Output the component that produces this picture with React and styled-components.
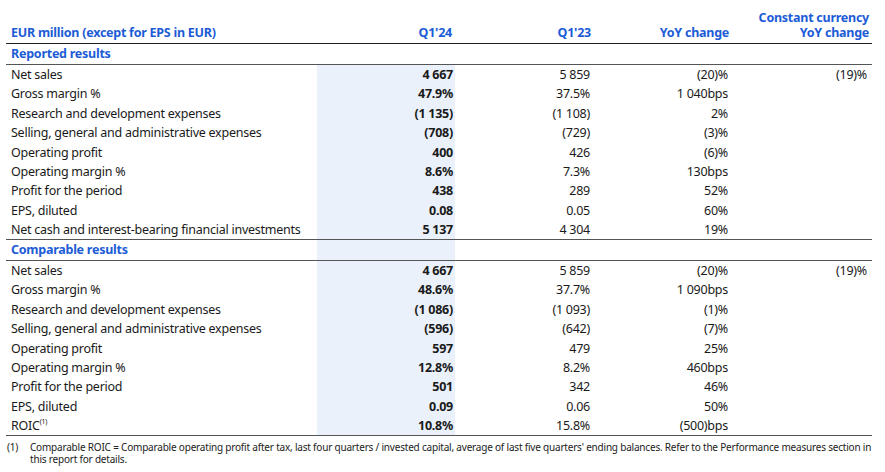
import React from "react";
import styled, { createGlobalStyle } from "styled-components";

const Global = createGlobalStyle`
  html, body { margin: 0; padding: 0; background: #fff; }
  body { font-family: "Noto Sans", "Open Sans", sans-serif; color: #1a1a1a; }
`;

const BLUE = "#1c5cd6";
const SHADE = "#eaf1fb";

const Page = styled.div`
  width: 885px;
  height: 472px;
  padding: 8px 13px 0 6px;
  box-sizing: border-box;
`;

const Table = styled.table`
  width: 866px;
  border-collapse: collapse;
  table-layout: fixed;
  font-size: 12.5px;
  letter-spacing: -0.25px;
`;

const Col = styled.col``;

const HeadCell = styled.th`
  color: ${BLUE};
  font-weight: 700;
  text-align: ${(p) => (p.$left ? "left" : "right")};
  vertical-align: bottom;
  padding: 0 ${(p) => (p.$left ? "0" : "3px")} 3px ${(p) => (p.$left ? "5px" : "0")};
  line-height: 14.5px;
  border-bottom: 1.5px solid #222;
  height: 32px;
`;

const SectionCell = styled.td`
  color: ${BLUE};
  font-weight: 700;
  padding: 0 0 0 5px;
  height: 20px;
  line-height: 20px;
  border-bottom: 1.5px solid #555;
  background: ${(p) => (p.$shade ? SHADE : "transparent")};
`;

const Row = styled.tr`
  height: 19.45px;
  border-bottom: ${(p) => (p.$last ? "1.5px solid #555" : "none")};
`;

const Label = styled.td`
  padding: 0 0 0 5px;
  line-height: 19px;
  white-space: nowrap;
`;

const Num = styled.td`
  text-align: right;
  padding: 0 ${(p) => p.$pr || 4}px 0 0;
  line-height: 19px;
  white-space: nowrap;
  font-weight: ${(p) => (p.$bold ? 700 : 400)};
  background: ${(p) => (p.$shade ? SHADE : "transparent")};
`;

const Sup = styled.sup`
  font-size: 7px;
  vertical-align: 6px;
  line-height: 0;
`;

const Footnote = styled.div`
  display: grid;
  grid-template-columns: 23px 1fr;
  font-size: 10px;
  letter-spacing: -0.2px;
  line-height: 11.5px;
  padding: 6px 0 0 1px;
  color: #222;
`;

const reported = [
  ["Net sales", "4 667", "5 859", "(20)%", "(19)%"],
  ["Gross margin %", "47.9%", "37.5%", "1 040bps", ""],
  ["Research and development expenses", "(1 135)", "(1 108)", "2%", ""],
  ["Selling, general and administrative expenses", "(708)", "(729)", "(3)%", ""],
  ["Operating profit", "400", "426", "(6)%", ""],
  ["Operating margin %", "8.6%", "7.3%", "130bps", ""],
  ["Profit for the period", "438", "289", "52%", ""],
  ["EPS, diluted", "0.08", "0.05", "60%", ""],
  ["Net cash and interest-bearing financial investments", "5 137", "4 304", "19%", ""],
];

const comparable = [
  ["Net sales", "4 667", "5 859", "(20)%", "(19)%"],
  ["Gross margin %", "48.6%", "37.7%", "1 090bps", ""],
  ["Research and development expenses", "(1 086)", "(1 093)", "(1)%", ""],
  ["Selling, general and administrative expenses", "(596)", "(642)", "(7)%", ""],
  ["Operating profit", "597", "479", "25%", ""],
  ["Operating margin %", "12.8%", "8.2%", "460bps", ""],
  ["Profit for the period", "501", "342", "46%", ""],
  ["EPS, diluted", "0.09", "0.06", "50%", ""],
  ["ROIC", "10.8%", "15.8%", "(500)bps", "", true],
];

function DataRows({ rows }) {
  return rows.map((r, i) => (
    <Row key={i} $last={i === rows.length - 1}>
      <Label>
        {r[0]}
        {r[5] && <Sup>(1)</Sup>}
      </Label>
      <Num $bold $shade $pr={2}>{r[1]}</Num>
      <Num>{r[2]}</Num>
      <Num>{r[3]}</Num>
      <Num $pr={5}>{r[4]}</Num>
    </Row>
  ));
}

export default function App() {
  return (
    <>
      <Global />
      <Page>
        <Table>
          <colgroup>
            <Col style={{ width: 311 }} />
            <Col style={{ width: 138 }} />
            <Col style={{ width: 139 }} />
            <Col style={{ width: 138 }} />
            <Col style={{ width: 140 }} />
          </colgroup>
          <thead>
            <tr>
              <HeadCell $left>EUR million (except for EPS in EUR)</HeadCell>
              <HeadCell>Q1'24</HeadCell>
              <HeadCell>Q1'23</HeadCell>
              <HeadCell>YoY change</HeadCell>
              <HeadCell>
                Constant currency
                <br />
                YoY change
              </HeadCell>
            </tr>
          </thead>
          <tbody>
            <tr>
              <SectionCell>Reported results</SectionCell>
              <SectionCell />
              <SectionCell />
              <SectionCell />
              <SectionCell />
            </tr>
            <DataRows rows={reported} />
            <tr>
              <SectionCell>Comparable results</SectionCell>
              <SectionCell $shade />
              <SectionCell />
              <SectionCell />
              <SectionCell />
            </tr>
            <DataRows rows={comparable} />
          </tbody>
        </Table>
        <Footnote>
          <span>(1)</span>
          <span>
            Comparable ROIC = Comparable operating profit after tax, last four quarters / invested capital, average of last five quarters' ending balances. Refer to the Performance measures section in this report for details.
          </span>
        </Footnote>
      </Page>
    </>
  );
}
